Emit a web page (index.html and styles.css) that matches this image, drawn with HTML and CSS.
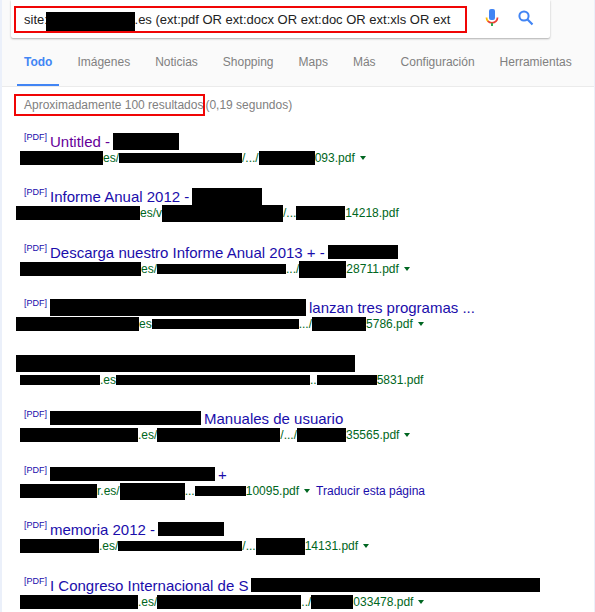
FILE: index.html
```html
<!doctype html>

<html lang="es">
<head>
	<title>Buscar</title>
	<meta charset="utf-8">
	<link rel="stylesheet" href="styles.css">
</head>

<body>
	<header class="header">
		<form class="search">
			<div class="query">
				<input class="query-text" type="text" aria-label="Buscar" value="site:                        .es (ext:pdf OR ext:docx OR ext:doc OR ext:xls OR ext">
				<span class="bar query-bar"></span>
			</div>
			<button class="icon" type="button" aria-label="Buscar por voz">
				<svg width="14" height="18" viewBox="0 0 14 18" fill="none">
					<rect x="4" y="0" width="6" height="11" rx="2" fill="#4285f4"/>
					<path d="M1.5 8.5c0 1.700.6 3 1.600 3.900" stroke="#fbbc05" stroke-width="1.800"/>
					<path d="M2.800 12.200c2.300 2.300 6.100 2.300 8.300 0 1-1 1.400-2.200 1.400-3.700" stroke="#ea4335" stroke-width="1.800"/>
					<path d="M7 14v3" stroke="#34a853" stroke-width="2"/>
				</svg>
			</button>
			<button class="icon" type="submit" aria-label="Buscar">
				<svg width="16" height="16" viewBox="0 0 16 16" fill="none" stroke="#4285f4">
					<circle cx="6" cy="6" r="4.600" stroke-width="2"/>
					<path d="M9.300 9.300l5.200 5.200" stroke-width="2.200"/>
				</svg>
			</button>
		</form>
		<nav class="tabs">
			<a class="active" href="#">Todo</a>
			<a href="#">Imágenes</a>
			<a href="#">Noticias</a>
			<a href="#">Shopping</a>
			<a href="#">Maps</a>
			<a href="#">Más</a>
			<a href="#">Configuración</a>
			<a href="#">Herramientas</a>
		</nav>
	</header>

	<main class="main">
		<p class="stats"><span class="count">Aproximadamente 100 resultados</span>(0,19 segundos)</p>

		<div class="result">
			<a class="title visited" href="#"><span class="type">[PDF]</span>Untitled -<span class="bar tall" style="width: 66px"></span></a>
			<div class="url"><span class="bar" style="width: 83px"></span>es/<span class="bar thin" style="width: 123px"></span>/.../<span class="bar" style="width: 56px"></span>093.pdf<button class="more" aria-label="Opciones"></button></div>
		</div>

		<div class="result">
			<a class="title" href="#"><span class="type">[PDF]</span>Informe Anual 2012 -<span class="bar tall" style="width: 70px"></span></a>
			<div class="url out"><span class="bar" style="width: 124px"></span>es/v<span class="bar tall" style="width: 121px"></span>/...<span class="bar" style="width: 49px"></span>14218.pdf</div>
		</div>

		<div class="result">
			<a class="title" href="#"><span class="type">[PDF]</span>Descarga nuestro Informe Anual 2013 + -<span class="bar" style="width: 70px"></span></a>
			<div class="url"><span class="bar" style="width: 121px"></span>es/<span class="bar thin" style="width: 129px"></span>.../<span class="bar tall" style="width: 47px"></span>28711.pdf<button class="more" aria-label="Opciones"></button></div>
		</div>

		<div class="result">
			<a class="title" href="#"><span class="type">[PDF]</span><span class="bar tall" style="width: 256px"></span>lanzan tres programas ...</a>
			<div class="url out"><span class="bar" style="width: 123px"></span>es<span class="bar thin" style="width: 147px"></span>.../<span class="bar" style="width: 54px"></span>5786.pdf<button class="more" aria-label="Opciones"></button></div>
		</div>

		<div class="result">
			<a class="title out" href="#" aria-label="Resultado"><span class="bar tall" style="width: 339px"></span></a>
			<div class="url"><span class="bar thin" style="width: 80px"></span>.es<span class="bar thin" style="width: 194px"></span>..<span class="bar thin" style="width: 60px"></span>5831.pdf</div>
		</div>

		<div class="result">
			<a class="title" href="#"><span class="type">[PDF]</span><span class="bar" style="width: 151px"></span>Manuales de usuario</a>
			<div class="url"><span class="bar" style="width: 118px"></span>.es/<span class="bar" style="width: 123px"></span>/.../<span class="bar" style="width: 49px"></span>35565.pdf<button class="more" aria-label="Opciones"></button></div>
		</div>

		<div class="result">
			<a class="title" href="#"><span class="type">[PDF]</span><span class="bar" style="width: 165px"></span>+</a>
			<div class="url"><span class="bar" style="width: 77px"></span>r.es/<span class="bar tall" style="width: 65px"></span>...<span class="bar thin" style="width: 51px"></span>10095.pdf<button class="more" aria-label="Opciones"></button><a class="translate" href="#">Traducir esta página</a></div>
		</div>

		<div class="result">
			<a class="title" href="#"><span class="type">[PDF]</span>memoria 2012 -<span class="bar" style="width: 66px"></span></a>
			<div class="url"><span class="bar" style="width: 79px"></span>.es/<span class="bar thin" style="width: 124px"></span>/...<span class="bar tall" style="width: 49px"></span>14131.pdf<button class="more" aria-label="Opciones"></button></div>
		</div>

		<div class="result">
			<a class="title" href="#"><span class="type">[PDF]</span>I Congreso Internacional de S<span class="bar" style="width: 289px"></span></a>
			<div class="url"><span class="bar" style="width: 118px"></span>.es/<span class="bar" style="width: 144px"></span>../<span class="bar" style="width: 42px"></span>033478.pdf<button class="more" aria-label="Opciones"></button></div>
		</div>
	</main>
</body>
</html>
```

FILE: styles.css
```css
* { box-sizing: border-box }
html { background-color: #fff }
body {
	margin: 0px;
	border-left: 2px solid #ebf0fa;
	border-right: 1px solid #ebf0fa;
	font-family: "Liberation Sans", Arial, sans-serif;
	font-size: 12px;
	color: #808080;
	overflow: hidden;
}
a { text-decoration: none; color: inherit }
button {
	padding: 0px;
	border: 0px;
	background: none;
}
.header {
	background-color: #fafafa;
	border-bottom: 1px solid #ebebeb;
}
.search {
	display: flex;
	align-items: center;
	height: 38px;
	margin: 0px 44px 0px 9px;
	padding: 0px 16px 0px 3px;
	background-color: #fff;
	border-radius: 0px 0px 2px 2px;
	box-shadow: 0px 1px 2px rgba(0, 0, 0, 0.3);
}
.query {
	position: relative;
	flex: 1;
	margin-right: 17px;
	border: 2px solid #f00505;
}
.query-text {
	display: block;
	width: 100%;
	height: 23px;
	padding: 0px 4px 0px 8px;
	border: 0px;
	outline: 0px;
	background: none;
	font-family: inherit;
	font-size: 13px;
	color: #222;
}
.icon {
	display: flex;
	justify-content: center;
	width: 16px;
	margin-bottom: 2px;
}
.icon + .icon { margin-left: 18px }

/* black bars that cover private text */
.bar {
	flex: none;
	height: 14px;
	background-color: #000;
}
.thin { height: 10px }
.tall { height: 17px }
.query-bar {
	position: absolute;
	top: 4px;
	left: 30px;
	width: 89px;
	height: 19px;
}

.tabs {
	display: flex;
	gap: 11px;
	margin-left: 15px;
}
.tabs a {
	height: 48px;
	padding: 0px 7px;
	line-height: 48px;
	white-space: nowrap;
}
.tabs .active {
	font-weight: bold;
	color: #4285f4;
	border-bottom: 2px solid #4285f4;
}

.main {
	padding: 7px 0px 0px 22px;
	white-space: nowrap;
}
.stats {
	display: flex;
	align-items: center;
	margin: 0px 0px 16px -10px;
}
.count {
	padding: 2px 0px 2px 8px;
	border: 2px solid #f00505;
	line-height: 14px;
}
.result { margin-bottom: 21px }
.result:nth-of-type(even) { margin-bottom: 22px }
.title {
	display: flex;
	align-items: center;
	gap: 3px;
	height: 18px;
	font-size: 15px;
	color: #1a0dab;
}
.visited { color: #609 }
.type {
	align-self: flex-start;
	font-size: 9px;
	line-height: 10px;
	color: #1a0dab;
}
.url {
	display: flex;
	align-items: center;
	height: 16px;
	margin-left: -4px;
	color: #006621;
}
.out { margin-left: -8px }
.more {
	width: 0px;
	margin: 0px 6px 0px 5px;
	border: 3px solid transparent;
	border-top: 4px solid #006621;
	border-bottom: 0px;
}
.translate { color: #1a0dab }
```
